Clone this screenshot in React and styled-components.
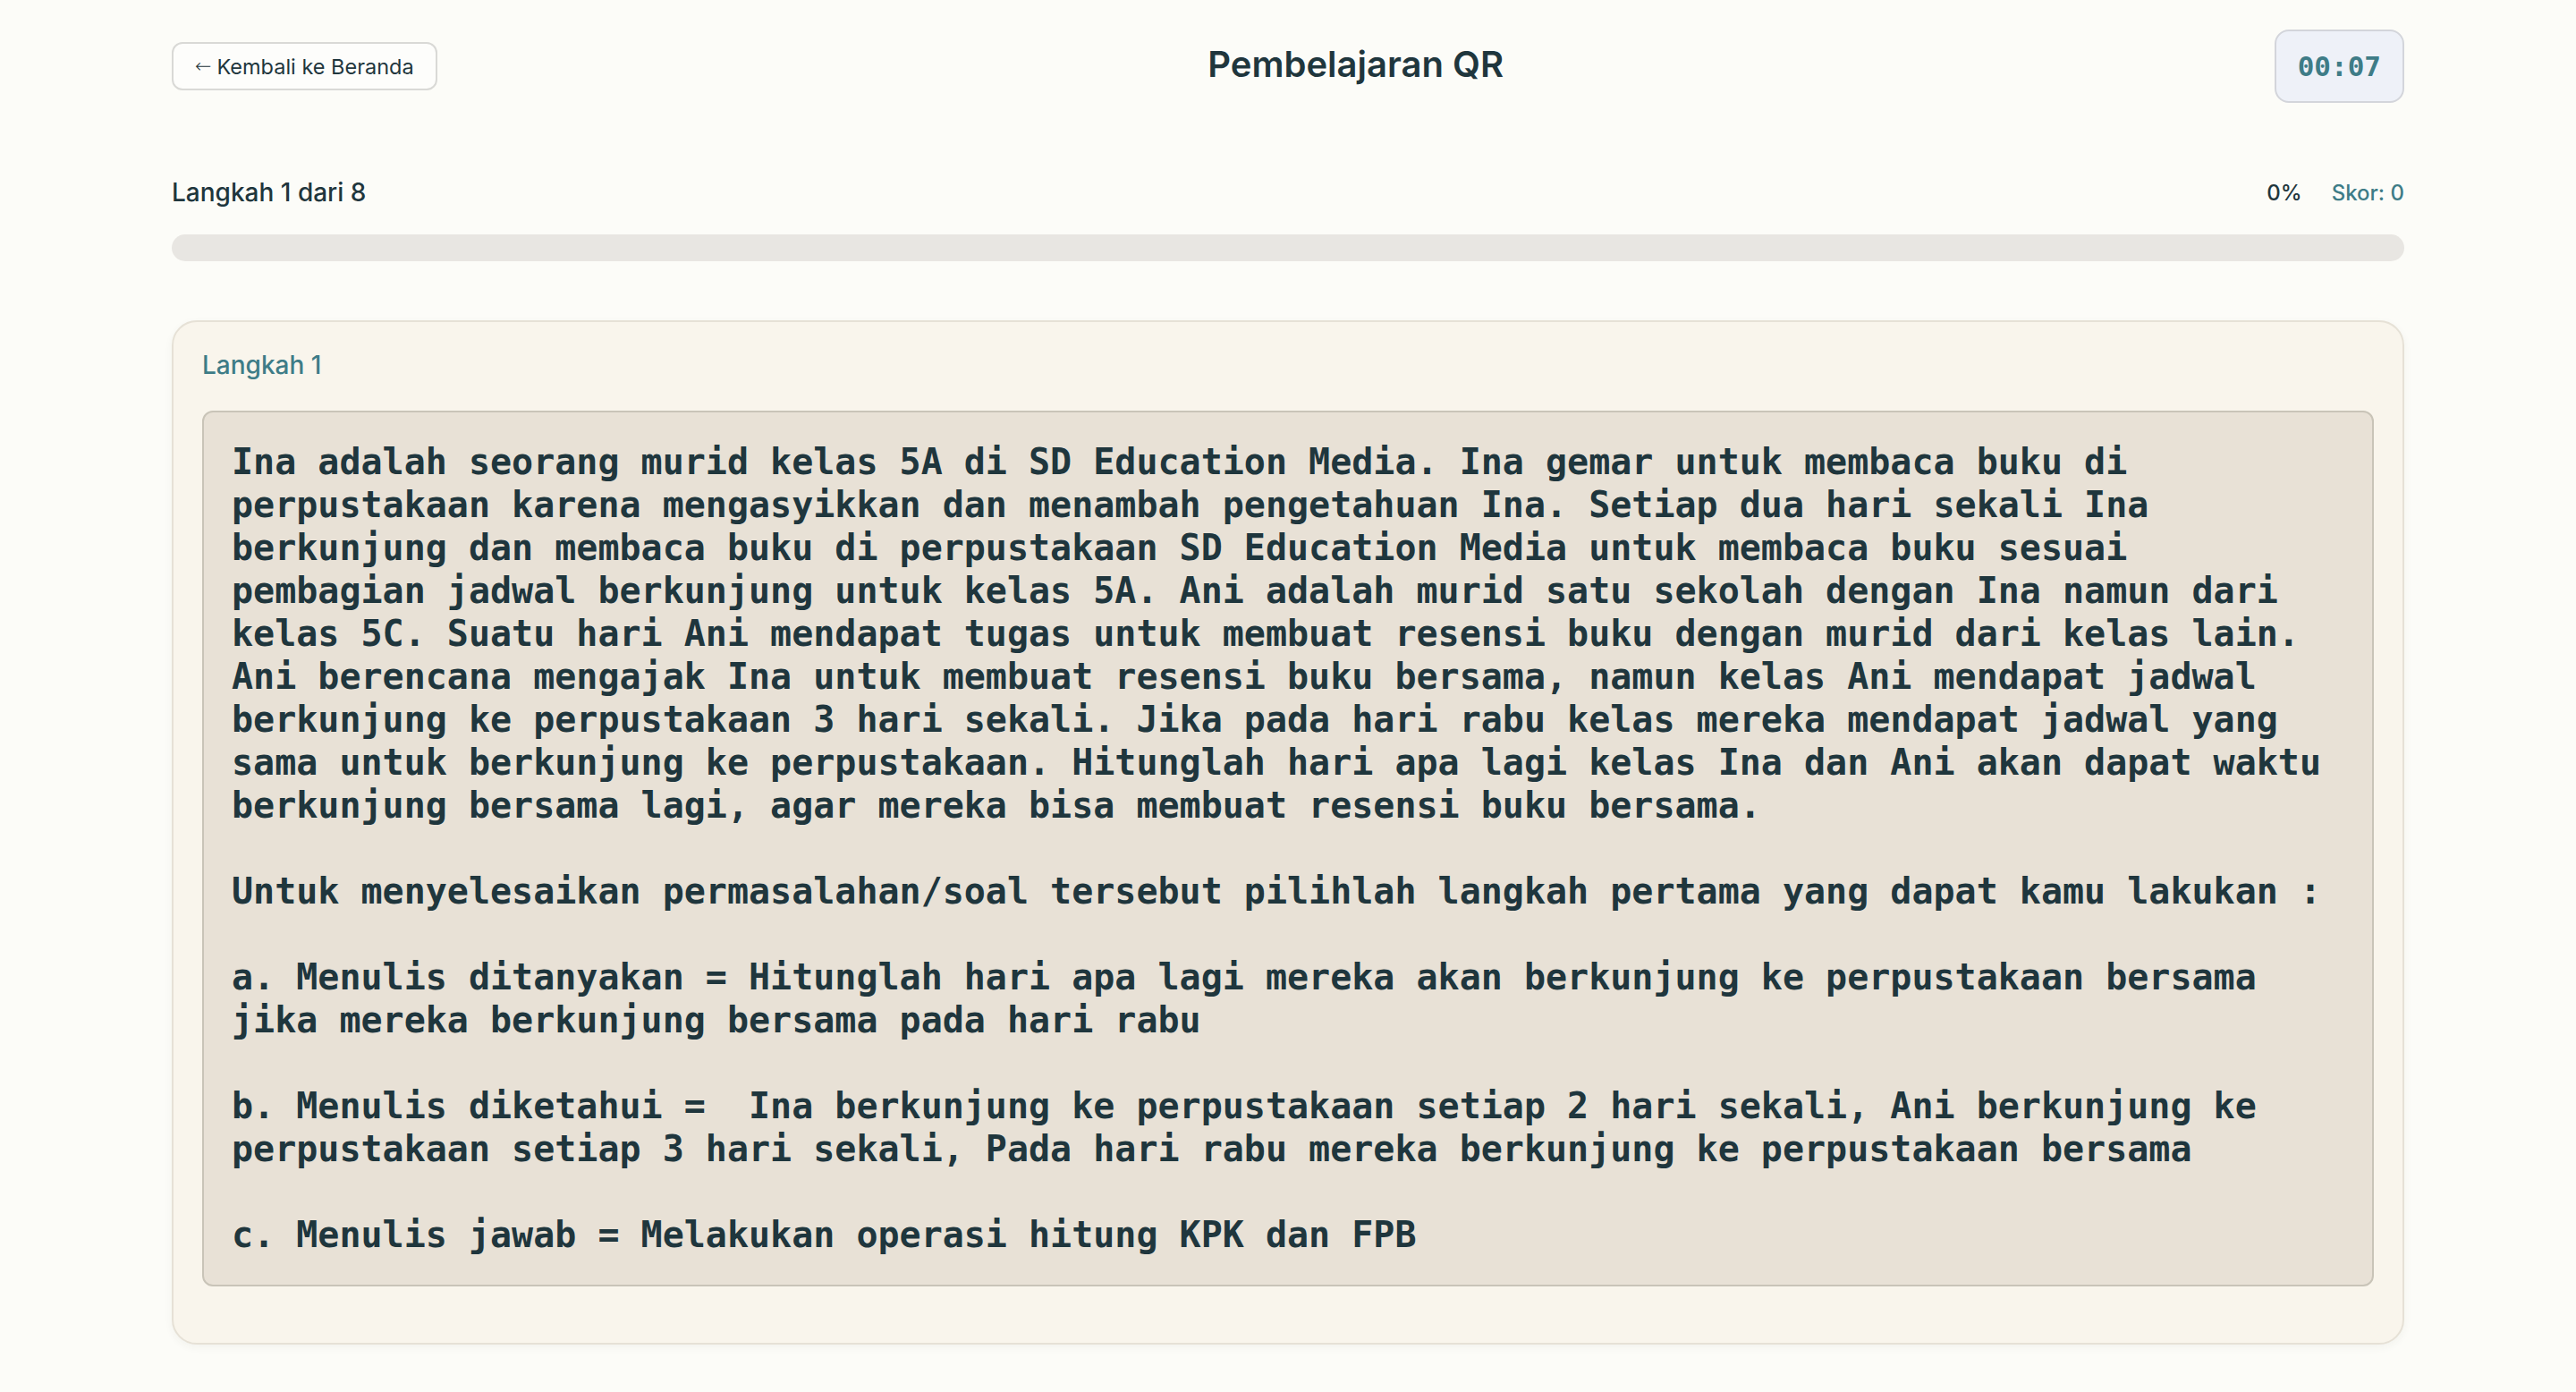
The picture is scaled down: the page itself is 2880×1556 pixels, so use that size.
import React from "react";
import styled, { createGlobalStyle } from "styled-components";

const GlobalStyle = createGlobalStyle`
  html, body { margin: 0; padding: 0; background: #fcfcf8; }
  body { font-family: "Inter", "Liberation Sans", sans-serif; color: #1f363d; }
  * { box-sizing: border-box; }
`;

const Page = styled.div`
  max-width: 2496px;
  margin: 0 auto;
  padding: 33px 0 54px;
`;

const Header = styled.header`
  display: flex;
  align-items: center;
  justify-content: space-between;
`;

const BackButton = styled.button`
  display: inline-flex;
  align-items: center;
  gap: 6px;
  height: 54px;
  padding: 0 24px;
  background: #fdfdfb;
  border: 2px solid #d9d9d6;
  border-radius: 12px;
  font-family: "Inter", "Liberation Sans", sans-serif;
  font-size: 23.5px;
  font-weight: 400;
  color: #1f363d;
  cursor: pointer;
`;

const Arrow = styled.span`
  font-family: "DejaVu Sans", sans-serif;
  font-size: 22px;
  font-weight: 300;
  line-height: 1;
`;

const Title = styled.h1`
  margin: 0 0 5px;
  font-size: 40px;
  font-weight: 600;
  line-height: 48px;
  color: #1f363d;
`;

const Timer = styled.div`
  padding: 21px 24px;
  background: #eef1f8;
  border: 2px solid #d3d5db;
  border-radius: 16px;
  font-family: "DejaVu Sans Mono", "Liberation Mono", monospace;
  font-weight: 700;
  font-size: 31px;
  line-height: 36px;
  color: #3e7c87;
`;

const ProgressRow = styled.div`
  margin-top: 83px;
  display: flex;
  align-items: center;
  justify-content: space-between;
`;

const StepCount = styled.div`
  font-size: 28px;
  font-weight: 500;
  line-height: 34px;
  color: #1f363d;
`;

const Stats = styled.div`
  display: flex;
  align-items: center;
  gap: 33px;
  font-size: 24px;
  font-weight: 500;
`;

const Stat = styled.span`
  color: ${(p) => (p.$accent ? "#3e7c87" : "#1f363d")};
`;

const Track = styled.div`
  margin-top: 30px;
  height: 30px;
  border-radius: 15px;
  background: #e8e6e2;
  overflow: hidden;
`;

const Fill = styled.div`
  height: 100%;
  background: #3e7c87;
`;

const Card = styled.section`
  margin-top: 66px;
  padding: 32px 32px 63px;
  background: #f9f5ec;
  border: 2px solid #e6e1d6;
  border-radius: 28px;
  box-shadow: 0 3px 10px rgba(60, 50, 30, 0.05);
`;

const StepLabel = styled.div`
  font-size: 28px;
  font-weight: 500;
  line-height: 33px;
  color: #3e7c87;
  margin-bottom: 34px;
`;

const Question = styled.div`
  padding: 31px 44px 32px 31px;
  background: #e8e1d6;
  border: 2px solid #c9c4b8;
  border-radius: 12px;
  font-family: "DejaVu Sans Mono", "Liberation Mono", monospace;
  font-weight: 700;
  font-size: 40px;
  line-height: 48px;
  color: #1f363d;
  white-space: pre-wrap;
  word-break: normal;
`;

const questionText =
  "Ina adalah seorang murid kelas 5A di SD Education Media. Ina gemar untuk membaca buku di perpustakaan karena mengasyikkan dan menambah pengetahuan Ina. Setiap dua hari sekali Ina berkunjung dan membaca buku di perpustakaan SD Education Media untuk membaca buku sesuai pembagian jadwal berkunjung untuk kelas 5A. Ani adalah murid satu sekolah dengan Ina namun dari kelas 5C. Suatu hari Ani mendapat tugas untuk membuat resensi buku dengan murid dari kelas lain. Ani berencana mengajak Ina untuk membuat resensi buku bersama, namun kelas Ani mendapat jadwal berkunjung ke perpustakaan 3 hari sekali. Jika pada hari rabu kelas mereka mendapat jadwal yang sama untuk berkunjung ke perpustakaan. Hitunglah hari apa lagi kelas Ina dan Ani akan dapat waktu berkunjung bersama lagi, agar mereka bisa membuat resensi buku bersama.\n\n" +
  "Untuk menyelesaikan permasalahan/soal tersebut pilihlah langkah pertama yang dapat kamu lakukan :\n\n" +
  "a. Menulis ditanyakan = Hitunglah hari apa lagi mereka akan berkunjung ke perpustakaan bersama jika mereka berkunjung bersama pada hari rabu\n\n" +
  "b. Menulis diketahui =  Ina berkunjung ke perpustakaan setiap 2 hari sekali, Ani berkunjung ke perpustakaan setiap 3 hari sekali, Pada hari rabu mereka berkunjung ke perpustakaan bersama\n\n" +
  "c. Menulis jawab = Melakukan operasi hitung KPK dan FPB";

export default function App() {
  const progress = 0;
  return (
    <>
      <GlobalStyle />
      <Page>
        <Header>
          <BackButton>
            <Arrow>←</Arrow>
            <span>Kembali ke Beranda</span>
          </BackButton>
          <Title>Pembelajaran QR</Title>
          <Timer>00:07</Timer>
        </Header>
        <ProgressRow>
          <StepCount>Langkah 1 dari 8</StepCount>
          <Stats>
            <Stat>{progress}%</Stat>
            <Stat $accent>Skor: 0</Stat>
          </Stats>
        </ProgressRow>
        <Track>
          <Fill style={{ width: `${progress}%` }} />
        </Track>
        <Card>
          <StepLabel>Langkah 1</StepLabel>
          <Question>{questionText}</Question>
        </Card>
      </Page>
    </>
  );
}
